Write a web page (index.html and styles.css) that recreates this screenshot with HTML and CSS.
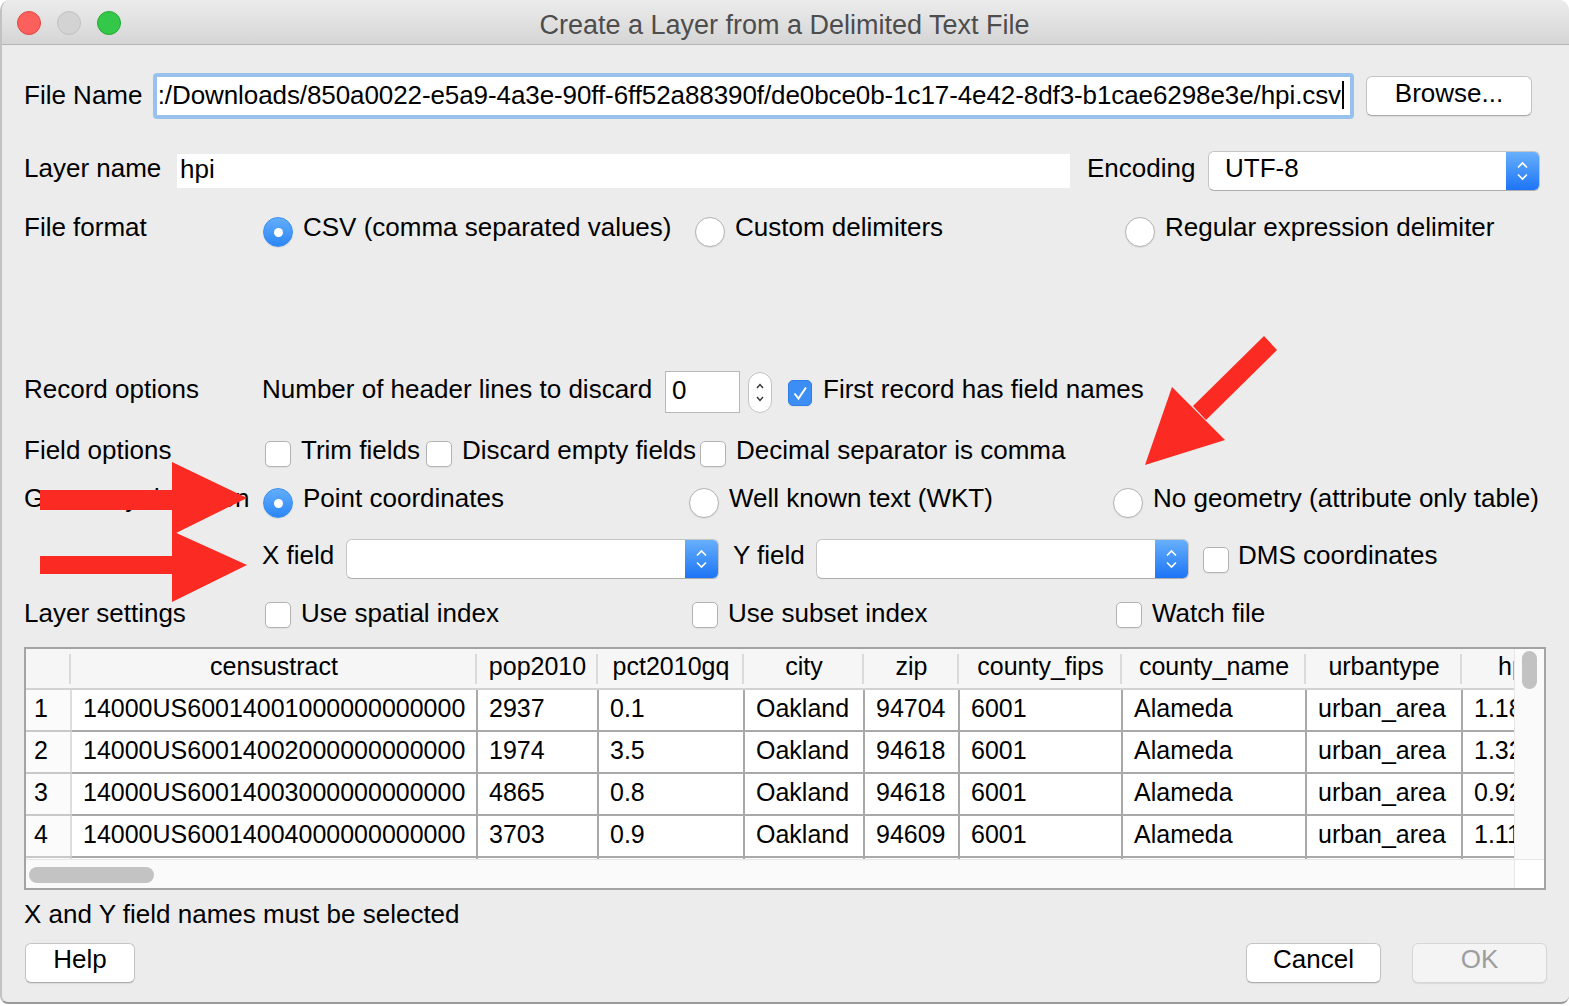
FILE: index.html
```html
<!DOCTYPE html>
<html>
<head>
<meta charset="utf-8">
<title>Create a Layer from a Delimited Text File</title>
<link rel="stylesheet" href="styles.css">
</head>
<body>
<div class="window">
  <div class="titlebar">
    <div class="lights">
      <span class="light red"></span>
      <span class="light gray"></span>
      <span class="light green"></span>
    </div>
    <div class="title">Create a Layer from a Delimited Text File</div>
    <div></div>
  </div>

  <div class="content">
    <div class="row r-file">
      <span class="lbl w-file">File Name</span>
      <div class="focus-input">
        <div class="path"><span>:/Downloads/850a0022-e5a9-4a3e-90ff-6ff52a88390f/de0bce0b-1c17-4e42-8df3-b1cae6298e3e/hpi.csv</span><span class="caret"></span></div>
      </div>
      <div class="btn btn-browse">Browse...</div>
    </div>

    <div class="row r-layer">
      <span class="lbl w-layer">Layer name</span>
      <div class="plain-input">hpi</div>
      <span class="lbl w-enc">Encoding</span>
      <div class="combo combo-enc">
        <span class="combo-text">UTF-8</span>
        <span class="combo-btn"><svg width="33" height="40" viewBox="0 0 33 40"><path d="M12 16.5 L16.5 12 L21 16.5 M12 23.5 L16.5 28 L21 23.5" fill="none" stroke="#fff" stroke-width="1.6"/></svg></span>
      </div>
    </div>

    <div class="row r-format">
      <span class="lbl w-col">File format</span>
      <div class="opt o-f1"><span class="radio on"></span><span class="t">CSV (comma separated values)</span></div>
      <div class="opt o-f2"><span class="radio"></span><span class="t">Custom delimiters</span></div>
      <div class="opt"><span class="radio"></span><span class="t">Regular expression delimiter</span></div>
    </div>

    <div class="row r-record">
      <span class="lbl w-col">Record options</span>
      <span class="w-hdr">Number of header lines to discard</span>
      <div class="spin-box">0</div>
      <div class="spin-arrows"><svg width="24" height="41" viewBox="0 0 24 41"><path d="M9 16 L12 12.5 L15 16 M9 25 L12 28.5 L15 25" fill="none" stroke="#333" stroke-width="1.4"/></svg></div>
      <div class="opt o-first"><span class="check on"><svg width="24" height="26" viewBox="0 0 24 26"><path d="M6.5 13.5 L10.5 18.5 L18 7.5" fill="none" stroke="#fff" stroke-width="2"/></svg></span><span class="t">First record has field names</span></div>
    </div>

    <div class="row r-field">
      <span class="lbl w-col">Field options</span>
      <div class="opt o-trim"><span class="check first"></span><span class="t">Trim fields</span></div>
      <div class="opt o-disc"><span class="check"></span><span class="t">Discard empty fields</span></div>
      <div class="opt"><span class="check"></span><span class="t">Decimal separator is comma</span></div>
    </div>

    <div class="row r-geom">
      <span class="lbl w-col">Geometry definition</span>
      <div class="opt o-g1"><span class="radio on"></span><span class="t">Point coordinates</span></div>
      <div class="opt o-g2"><span class="radio"></span><span class="t">Well known text (WKT)</span></div>
      <div class="opt"><span class="radio"></span><span class="t">No geometry (attribute only table)</span></div>
    </div>

    <div class="row r-xy">
      <span class="w-col"></span>
      <span class="w-x">X field</span>
      <div class="combo combo-xy">
        <span class="combo-text"></span>
        <span class="combo-btn"><svg width="33" height="40" viewBox="0 0 33 40"><path d="M12 16.5 L16.5 12 L21 16.5 M12 23.5 L16.5 28 L21 23.5" fill="none" stroke="#fff" stroke-width="1.6"/></svg></span>
      </div>
      <span class="w-y">Y field</span>
      <div class="combo combo-xy">
        <span class="combo-text"></span>
        <span class="combo-btn"><svg width="33" height="40" viewBox="0 0 33 40"><path d="M12 16.5 L16.5 12 L21 16.5 M12 23.5 L16.5 28 L21 23.5" fill="none" stroke="#fff" stroke-width="1.6"/></svg></span>
      </div>
      <div class="opt o-dms"><span class="check"></span><span class="t">DMS coordinates</span></div>
    </div>

    <div class="row r-settings">
      <span class="lbl w-col">Layer settings</span>
      <div class="opt o-s1"><span class="check first"></span><span class="t">Use spatial index</span></div>
      <div class="opt o-s2"><span class="check"></span><span class="t">Use subset index</span></div>
      <div class="opt"><span class="check"></span><span class="t">Watch file</span></div>
    </div>

    <div class="table-frame">
      <div class="table-main">
        <div class="viewport">
          <table class="grid">
            <colgroup>
              <col class="c-num"><col class="c-tract"><col class="c-pop"><col class="c-pct"><col class="c-city"><col class="c-zip"><col class="c-fips"><col class="c-cname"><col class="c-urban"><col class="c-hpi">
            </colgroup>
            <thead>
              <tr><th class="num"></th><th>censustract</th><th>pop2010</th><th>pct2010gq</th><th>city</th><th>zip</th><th>county_fips</th><th>county_name</th><th>urbantype</th><th>hpi</th></tr>
            </thead>
            <tbody>
              <tr><td class="num">1</td><td>14000US60014001000000000000</td><td>2937</td><td>0.1</td><td>Oakland</td><td>94704</td><td>6001</td><td>Alameda</td><td>urban_area</td><td>1.1813</td></tr>
              <tr><td class="num">2</td><td>14000US60014002000000000000</td><td>1974</td><td>3.5</td><td>Oakland</td><td>94618</td><td>6001</td><td>Alameda</td><td>urban_area</td><td>1.3244</td></tr>
              <tr><td class="num">3</td><td>14000US60014003000000000000</td><td>4865</td><td>0.8</td><td>Oakland</td><td>94618</td><td>6001</td><td>Alameda</td><td>urban_area</td><td>0.9217</td></tr>
              <tr><td class="num">4</td><td>14000US60014004000000000000</td><td>3703</td><td>0.9</td><td>Oakland</td><td>94609</td><td>6001</td><td>Alameda</td><td>urban_area</td><td>1.1155</td></tr>
              <tr><td class="num">5</td><td>14000US60014005000000000000</td><td>3517</td><td>0.0</td><td>Oakland</td><td>94609</td><td>6001</td><td>Alameda</td><td>urban_area</td><td>1.0563</td></tr>
            </tbody>
          </table>
        </div>
        <div class="vscroll"><span class="vthumb"></span></div>
      </div>
      <div class="table-bottom">
        <div class="hscroll"><span class="hthumb"></span></div>
        <div class="corner"></div>
      </div>
    </div>

    <div class="status">X and Y field names must be selected</div>

    <div class="buttons">
      <div class="btn btn-help">Help</div>
      <div class="spacer"></div>
      <div class="btn btn-cancel">Cancel</div>
      <div class="btn btn-ok">OK</div>
    </div>
  </div>

  <svg class="arrows" width="1569" height="1006" viewBox="0 0 1569 1006">
    <g fill="#fb2a22">
      <rect x="40" y="490" width="136" height="20"/>
      <polygon points="172,462 247,498 172,535"/>
      <rect x="40" y="556" width="136" height="18"/>
      <polygon points="172,531 247,565 172,602"/>
      <polygon points="1264,336 1277,350 1206,420 1193,406"/>
      <polygon points="1172,387 1225,440 1145,465"/>
    </g>
  </svg>
</div>
</body>
</html>
```

FILE: styles.css
```css
* { box-sizing: border-box; }

body {
  margin: 0;
  background: #ffffff;
  font-family: "Liberation Sans", Arial, Helvetica, sans-serif;
  font-size: 26px;
  color: #000;
}

.window {
  position: relative;
  width: 1569px;
  height: 1004px;
  background: #ececec;
  border-left: 2px solid #c2c2c2;
  border-bottom: 2px solid #9a9a9a;
  border-radius: 10px 10px 8px 8px;
  overflow: hidden;
}

/* title bar */
.titlebar {
  height: 45px;
  display: grid;
  grid-template-columns: 1fr auto 1fr;
  align-items: center;
  background: linear-gradient(#ececec, #d5d5d5);
  border-bottom: 1px solid #b5b5b5;
  margin-left: -2px;
}
.lights {
  display: flex;
  gap: 16px;
  padding-left: 17px;
  padding-top: 2px;
}
.light {
  width: 24px;
  height: 24px;
  border-radius: 50%;
}
.red { background: #fc605c; border: 1px solid #e1473f; }
.gray { background: #d3d3d3; border: 1px solid #c1c1c1; }
.green { background: #34c84a; border: 1px solid #25a833; }
.title {
  color: #4d4d4d;
  font-size: 27px;
  padding-top: 6px;
}

.content {
  padding: 0 0 0 22px;
}

.row {
  display: flex;
  align-items: center;
  white-space: nowrap;
}
.row > span, .opt > .t { padding-bottom: 5px; }
.lbl { flex: none; }
.w-col { width: 238px; flex: none; }
.w-file { width: 129px; }
.w-layer { width: 153px; }
.w-enc { width: 121px; margin-left: 17px; }

/* row geometry */
.r-file { margin-top: 26px; height: 50px; }
.r-file > span { padding-bottom: 2px; }
.r-layer { margin-top: 29px; height: 42px; }
.r-format { margin-top: 18px; height: 40px; }
.r-record { margin-top: 121px; height: 42px; }
.r-field { margin-top: 20px; height: 40px; }
.r-geom { margin-top: 8px; height: 40px; }
.r-xy { margin-top: 17px; height: 42px; }
.r-xy > span, .r-xy .opt > .t { padding-bottom: 8px; }
.r-settings { margin-top: 14px; height: 40px; }
.r-settings > span, .r-settings .opt > .t { padding-bottom: 2px; }

/* file name input */
.focus-input {
  width: 1201px;
  height: 46px;
  border: 4px solid #99c1ee;
  border-radius: 4px;
  background: #fff;
  overflow: hidden;
  flex: none;
}
.path {
  height: 100%;
  display: flex;
  align-items: center;
  justify-content: flex-end;
  padding-right: 6px;
  padding-bottom: 2px;
  overflow: hidden;
  letter-spacing: -0.09px;
}
.path span:first-child { flex: none; }
.caret {
  display: inline-block;
  width: 2px;
  height: 28px;
  background: #000;
  margin-left: 1px;
  flex: none;
}

.btn {
  background: #fff;
  border: 1px solid #c4c4c4;
  border-bottom-color: #adadad;
  border-radius: 6px;
  height: 40px;
  display: flex;
  align-items: center;
  justify-content: center;
  box-shadow: 0 1px 1px rgba(0,0,0,0.08);
  flex: none;
}
.btn-browse { width: 166px; margin-left: 12px; padding-bottom: 6px; }

/* layer name */
.plain-input {
  width: 893px;
  height: 34px;
  background: #fff;
  padding-left: 3px;
  padding-bottom: 4px;
  display: flex;
  align-items: center;
  flex: none;
}

.combo {
  display: flex;
  height: 40px;
  background: #fff;
  border: 1px solid #c5c5c5;
  border-bottom-color: #acacac;
  border-radius: 6px;
  overflow: hidden;
  flex: none;
}
.combo-enc { width: 332px; }
.combo-text {
  flex: 1;
  padding-left: 16px;
  display: flex;
  align-items: center;
  padding-bottom: 6px;
}
.combo-btn {
  width: 33px;
  background: linear-gradient(#67b0fc, #1d74f5);
  display: flex;
  align-items: center;
  justify-content: center;
}
.combo-btn svg { display: block; }

/* options */
.opt {
  display: flex;
  align-items: center;
  flex: none;
}
.radio {
  width: 30px;
  height: 30px;
  border-radius: 50%;
  background: #fff;
  border: 1px solid #b3b3b3;
  box-shadow: 0 1px 1px rgba(0,0,0,0.08);
  margin-right: 10px;
  flex: none;
  margin-top: 4px;
  position: relative;
}
.radio.on {
  background: linear-gradient(#62aefb, #2c86f5);
  border-color: #3b8ff0;
}
.radio.on::after {
  content: "";
  position: absolute;
  left: 10px;
  top: 10px;
  width: 9px;
  height: 9px;
  border-radius: 50%;
  background: #fff;
}
.o-f1 { width: 433px; padding-left: 1px; }
.o-f2 { width: 430px; }
.o-g1 { width: 427px; padding-left: 1px; }
.o-g2 { width: 424px; }

.check {
  width: 26px;
  height: 26px;
  border-radius: 5px;
  background: #fff;
  border: 1px solid #b3b3b3;
  box-shadow: 0 1px 1px rgba(0,0,0,0.06);
  margin-right: 10px;
  flex: none;
  margin-top: 2px;
}
.check.on {
  width: 24px;
  background: #3d8ef4;
  border-color: #2f7fe6;
  margin-right: 11px;
}
.check.on svg { display: block; margin: -1px; }
.o-trim { width: 164px; padding-left: 3px; }
.o-disc { width: 274px; }
.o-s1 { width: 430px; padding-left: 3px; }
.o-s2 { width: 424px; }

/* record options */
.w-hdr { width: 403px; flex: none; }
.spin-box {
  width: 75px;
  height: 42px;
  background: #fff;
  border: 1px solid #b8b8b8;
  display: flex;
  align-items: center;
  padding-left: 6px;
  padding-bottom: 3px;
  flex: none;
}
.spin-arrows {
  width: 24px;
  height: 41px;
  margin-left: 8px;
  border: 1px solid #c4c4c4;
  border-radius: 12px;
  background: #fff;
  flex: none;
  overflow: hidden;
}
.spin-arrows svg { display: block; margin: -1px; }
.o-first { margin-left: 16px; }

/* xy */
.w-x { width: 84px; flex: none; }
.w-y { width: 83px; margin-left: 14px; flex: none; }
.combo-xy { width: 373px; }
.o-dms { margin-left: 14px; }
.o-dms .check { margin-right: 9px; }

/* table */
.table-frame {
  margin-top: 13px;
  width: 1522px;
  height: 243px;
  border: 2px solid #a4a4a4;
  background: #fff;
  display: flex;
  flex-direction: column;
}
.table-main {
  display: flex;
  height: 210px;
}
.viewport {
  width: 1488px;
  height: 210px;
  overflow: hidden;
  flex: none;
}
.grid {
  border-collapse: collapse;
  table-layout: fixed;
  width: 1556px;
  font-size: 25px;
}
.c-num { width: 45px; }
.c-tract { width: 406px; }
.c-pop { width: 121px; }
.c-pct { width: 146px; }
.c-city { width: 120px; }
.c-zip { width: 95px; }
.c-fips { width: 163px; }
.c-cname { width: 184px; }
.c-urban { width: 156px; }
.c-hpi { width: 120px; }

.grid th {
  height: 40px;
  background: #f6f6f6;
  font-weight: normal;
  text-align: center;
  padding: 0 0 4px;
  border-bottom: 2px solid #d2d2d2;
  background-image: linear-gradient(#dadada, #dadada);
  background-size: 2px 30px;
  background-position: right center;
  background-repeat: no-repeat;
  white-space: nowrap;
  overflow: hidden;
}
.grid th:last-child { background-image: none; text-align: left; padding-left: 36px; }
.grid td {
  height: 42px;
  padding: 0 0 3px 11px;
  border-right: 2px solid #a9a9a9;
  border-bottom: 2px solid #a9a9a9;
  white-space: nowrap;
  overflow: hidden;
}
.grid td.num {
  padding-left: 8px;
  border-right: 2px solid #dddddd;
  border-bottom-color: #c8c8c8;
  background: #fbfbfb;
}
.vscroll {
  flex: 1;
  background: #fafafa;
  border-left: 1px solid #e8e8e8;
  padding: 2px 0 0 7px;
}
.vthumb {
  display: block;
  width: 15px;
  height: 38px;
  border-radius: 8px;
  background: #c2c2c2;
}
.table-bottom {
  display: flex;
  flex: 1;
  border-top: 1px solid #e6e6e6;
}
.hscroll {
  width: 1488px;
  background: #fafafa;
  padding: 7px 0 0 3px;
}
.hthumb {
  display: block;
  width: 125px;
  height: 16px;
  border-radius: 8px;
  background: #c3c3c3;
}
.corner {
  flex: 1;
  background: #fff;
  border-left: 1px solid #e8e8e8;
}

.status {
  margin-top: 9px;
  height: 32px;
  display: flex;
  align-items: center;
  padding-bottom: 2px;
}

.buttons {
  margin-top: 12px;
  display: flex;
  width: 1522px;
  margin-left: 1px;
}
.spacer { flex: 1; }
.btn-help { width: 110px; padding-bottom: 7px; }
.btn-cancel { width: 135px; padding-bottom: 7px; }
.btn-ok {
  width: 135px;
  margin-left: 31px;
  padding-bottom: 7px;
  background: #f4f4f4;
  color: #9d9d9d;
  border-color: #d6d6d6;
}

.arrows {
  position: absolute;
  left: -2px;
  top: 0;
  pointer-events: none;
}
```
